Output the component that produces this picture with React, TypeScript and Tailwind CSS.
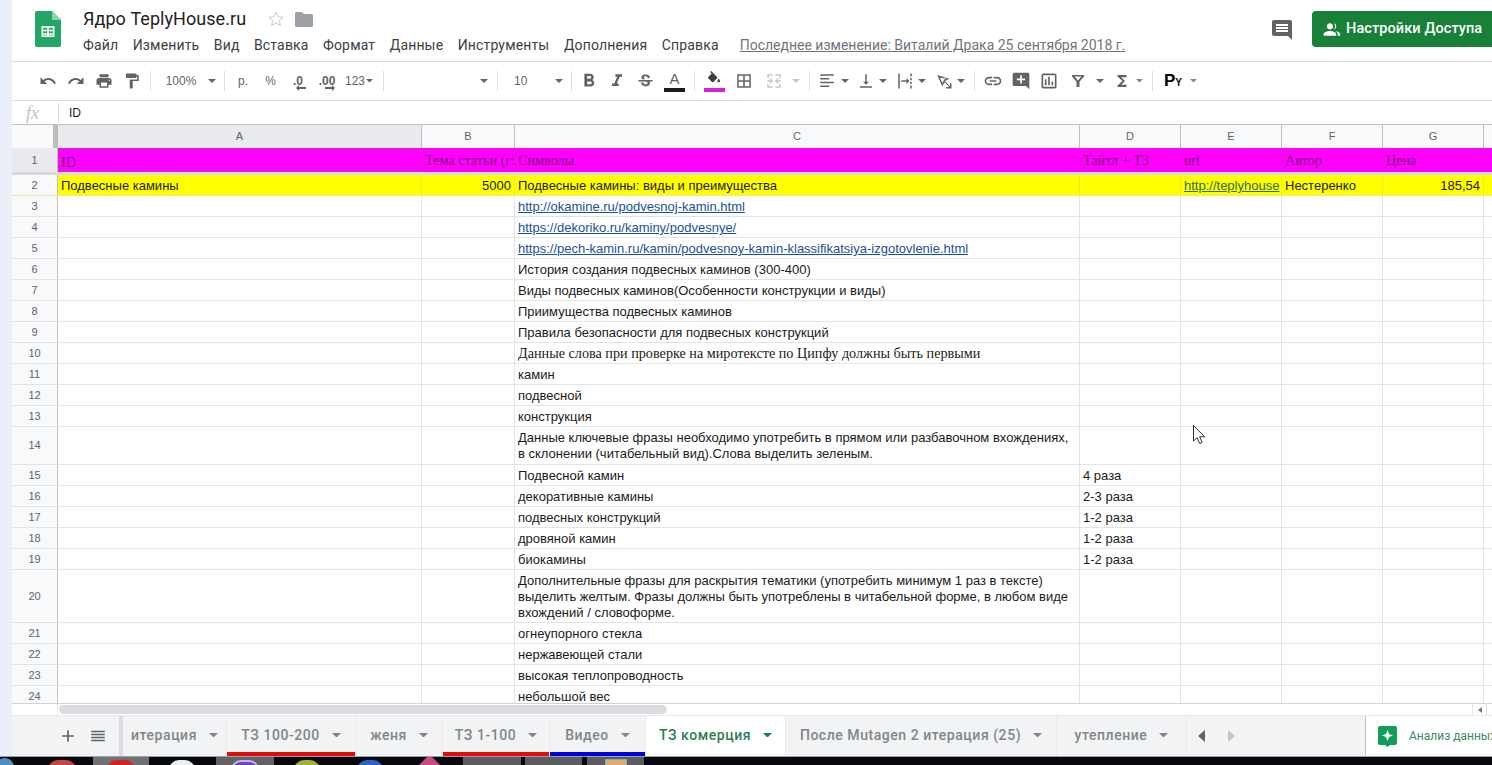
import type { ReactNode } from "react";

const ICON = "#5f6368";

const paths = {
  undo: "M12.5 8c-2.65 0-5.05.99-6.9 2.6L2 7v9h9l-3.62-3.62c1.39-1.16 3.16-1.88 5.12-1.88 3.54 0 6.55 2.31 7.6 5.5l2.37-.78C21.08 11.03 17.15 8 12.5 8z",
  redo: "M18.4 10.6C16.55 8.99 14.15 8 11.5 8c-4.65 0-8.58 3.03-9.96 7.22L3.9 16c1.05-3.19 4.05-5.5 7.6-5.5 1.95 0 3.73.72 5.12 1.88L13 16h9V7l-3.6 3.6z",
  print: "M19 8H5c-1.66 0-3 1.34-3 3v6h4v4h12v-4h4v-6c0-1.66-1.34-3-3-3zm-3 11H8v-5h8v5zm3-7c-.55 0-1-.45-1-1s.45-1 1-1 1 .45 1 1-.45 1-1 1zm-1-9H6v4h12V3z",
  paint: "M18 4V3c0-.55-.45-1-1-1H5c-.55 0-1 .45-1 1v4c0 .55.45 1 1 1h12c.55 0 1-.45 1-1V6h1v4H9v11c0 .55.45 1 1 1h2c.55 0 1-.45 1-1v-9h8V4h-3z",
  bold: "M15.6 10.79c.97-.67 1.65-1.77 1.65-2.79 0-2.26-1.75-4-4-4H7v14h7.04c2.09 0 3.71-1.7 3.71-3.79 0-1.52-.86-2.82-2.15-3.42zM10 6.5h3c.83 0 1.5.67 1.5 1.5s-.67 1.5-1.5 1.5h-3v-3zm3.5 9H10v-3h3.5c.83 0 1.5.67 1.5 1.5s-.67 1.5-1.5 1.5z",
  italic: "M10 4v3h2.21l-3.42 8H6v3h8v-3h-2.21l3.42-8H18V4z",
  strike: "M7.24 8.75c-.26-.48-.39-1.03-.39-1.67 0-.61.13-1.16.4-1.67.26-.5.63-.93 1.11-1.29.48-.35 1.05-.63 1.7-.83.66-.19 1.39-.29 2.18-.29.81 0 1.54.11 2.21.34.66.22 1.23.54 1.69.94.47.4.83.88 1.08 1.43.25.55.38 1.15.38 1.81h-3.01c0-.31-.05-.59-.15-.85-.09-.27-.24-.49-.44-.68-.2-.19-.45-.33-.75-.44-.3-.1-.66-.16-1.06-.16-.39 0-.74.04-1.03.13-.29.09-.53.21-.72.36-.19.16-.34.34-.44.55-.1.21-.15.43-.15.66 0 .48.25.88.74 1.21.38.25.77.48 1.41.7H7.39c-.05-.08-.11-.17-.15-.25zM21 12v-2H3v2h9.62c.18.07.4.14.55.2.37.17.66.34.87.51.21.17.35.36.43.57.07.2.11.43.11.69 0 .23-.05.45-.14.66-.09.2-.23.38-.42.53-.19.15-.42.26-.71.35-.29.08-.63.13-1.01.13-.43 0-.83-.04-1.18-.13s-.66-.23-.91-.42c-.25-.19-.45-.44-.59-.75-.14-.31-.25-.76-.25-1.21H6.4c0 .55.08 1.13.24 1.58.16.45.37.85.65 1.21.28.35.6.66.98.92.37.26.78.48 1.22.65.44.17.9.3 1.38.39.48.08.96.13 1.44.13.8 0 1.53-.09 2.18-.28s1.21-.45 1.67-.79c.46-.34.82-.77 1.07-1.27s.38-1.07.38-1.71c0-.6-.1-1.14-.31-1.61-.05-.11-.11-.23-.17-.33H21z",
  fill: "M16.56 8.94L7.62 0 6.21 1.41l2.38 2.38-5.15 5.15c-.59.59-.59 1.54 0 2.12l5.5 5.5c.29.29.68.44 1.06.44s.77-.15 1.06-.44l5.5-5.5c.59-.58.59-1.53 0-2.12zM19 11.5s-2 2.17-2 3.5c0 1.1.9 2 2 2s2-.9 2-2c0-1.33-2-3.5-2-3.5z",
  borders: "M3 3v18h18V3H3zm8 16H5v-6h6v6zm0-8H5V5h6v6zm8 8h-6v-6h6v6zm0-8h-6V5h6v6z",
  merge: "M3 3h7v2H5v3H3V3zm11 0h7v5h-2V5h-5V3zM3 16h2v3h5v2H3v-5zm16 0h2v5h-7v-2h5v-3zM3 11h5l-2-2 1-1 4 4-4 4-1-1 2-2H3v-2zm18 0v2h-5l2 2-1 1-4-4 4-4 1 1-2 2h5z",
  align: "M3 3h18v2H3zm0 5h12v2H3zm0 5h18v2H3zm0 5h12v2H3z",
  valign: "M16 13h-3V3h-2v10H8l4 4 4-4zM4 19v2h16v-2H4z",
  wrap: "M3 2h2v20H3zM19 2h2v4h-2zm0 6h2v3h-2zm0 5h2v3h-2zm0 5h2v4h-2zM7 11h7V8l4 4-4 4v-3H7z",
  rotate: "M3 4l16 5-5 2.5L9.5 19 3 4zm3.6 3.6l3.2 7 2.6-4.6 2.8-1.2-8.6-1.2zM13 12l7 7v-4h2v7h-7v-2h4l-7-7z",
  link: "M3.9 12c0-1.71 1.39-3.1 3.1-3.1h4V7H7c-2.76 0-5 2.24-5 5s2.24 5 5 5h4v-1.9H7c-1.71 0-3.1-1.39-3.1-3.1zM8 13h8v-2H8v2zm9-6h-4v1.9h4c1.71 0 3.1 1.39 3.1 3.1s-1.39 3.1-3.1 3.1h-4V17h4c2.76 0 5-2.24 5-5s-2.24-5-5-5z",
  addComment: "M22 4c0-1.1-.9-2-2-2H4c-1.1 0-2 .9-2 2v12c0 1.1.9 2 2 2h14l4 4V4zm-5 7h-4v4h-2v-4H7V9h4V5h2v4h4v2z",
  chart: "M19 3H5c-1.1 0-2 .9-2 2v14c0 1.1.9 2 2 2h14c1.1 0 2-.9 2-2V5c0-1.1-.9-2-2-2zm0 16H5V5h14v14zM7 10h2v7H7zm4-3h2v10h-2zm4 6h2v4h-2z",
  filter: "M4 4h16v2l-6 7v7h-4v-7L4 6V4zm3.5 2l4.5 5.3L16.500 6h-9z",
  sigma: "M18 4H6v2l6.5 6L6 18v2h12v-3h-7l5-5-5-5h7z",
  comment: "M21.99 4c0-1.1-.89-2-1.99-2H4c-1.1 0-2 .9-2 2v12c0 1.1.9 2 2 2h14l4 4-.01-18zM18 14H6v-2h12v2zm0-3H6V9h12v2zm0-3H6V6h12v2z",
  person: "M10 12c2.2 0 4-1.8 4-4s-1.8-4-4-4-4 1.8-4 4 1.8 4 4 4zm0 2c-2.67 0-8 1.34-8 4v2h16v-2c0-2.66-5.33-4-8-4zM15 11.900c1.900-.4 3-2 3-3.900s-1.100-3.500-3-3.900c1 1 1.500 2.400 1.500 3.900S16 10.900 15 11.900zM17 14.300c1.800.7 3 1.900 3 3.700v2h3v-2c0-2-3-3.300-6-3.700z",
  plus: "M19 13h-6v6h-2v-6H5v-2h6V5h2v6h6v2z",
  list: "M3 5h18v2H3zm0 4h18v2H3zm0 4h18v2H3zm0 4h18v2H3z",
};

function Icon({ d, size = 18, color = ICON }: { d: string; size?: number; color?: string }) {
  return (
    <svg width={size} height={size} viewBox="0 0 24 24" fill={color} className="shrink-0">
      <path d={d} />
    </svg>
  );
}

function Caret({ color = "#666", size = 8 }: { color?: string; size?: number }) {
  return (
    <svg width={size} height={size / 2} viewBox="0 0 8 4" fill={color} className="shrink-0">
      <path d="M0 0h8L4 4z" />
    </svg>
  );
}

function Btn({ w, children }: { w: string; children: ReactNode }) {
  return <div className={`flex h-full items-center justify-center shrink-0 ${w}`}>{children}</div>;
}

function Sep({ ml }: { ml: string }) {
  return <div className={`h-[20px] w-px shrink-0 bg-[#dadce0] ${ml}`} />;
}

function Toolbar() {
  return (
    <div className="flex h-[40px] shrink-0 items-center border-y border-[#dadce0] pl-[21px] text-[12px] text-[#5f6368] [font-family:'Liberation_Sans',sans-serif]">
      <Btn w="w-[29px]"><Icon d={paths.undo} /></Btn>
      <Btn w="w-[28px]"><Icon d={paths.redo} /></Btn>
      <Btn w="w-[28px]"><Icon d={paths.print} /></Btn>
      <Btn w="w-[28px]"><Icon d={paths.paint} /></Btn>
      <Sep ml="ml-[4px]" />
      <Btn w="w-[50px] ml-[5px]">100%</Btn>
      <Btn w="w-[12px]"><Caret /></Btn>
      <Sep ml="ml-[6px]" />
      <Btn w="w-[28px] ml-[4px]">р.</Btn>
      <Btn w="w-[27px]">%</Btn>
      <Btn w="w-[28px]">
        <span className="relative font-bold">
          .0
          <svg width="10" height="6" viewBox="0 0 10 6" className="absolute left-[3px] top-[13px]" fill="#5f6368"><path d="M0 3l3-3v2h7v2H3v2z" /></svg>
        </span>
      </Btn>
      <Btn w="w-[30px]">
        <span className="relative font-bold">
          .00
          <svg width="10" height="6" viewBox="0 0 10 6" className="absolute left-[6px] top-[13px]" fill="#5f6368"><path d="M10 3L7 0v2H0v2h7v2z" /></svg>
        </span>
      </Btn>
      <Btn w="w-[34px] gap-[1px]">123<Caret size={7} /></Btn>
      <Sep ml="ml-[7px]" />
      <div className="w-[94px] shrink-0" />
      <Btn w="w-[12px]"><Caret /></Btn>
      <Sep ml="ml-[7px]" />
      <div className="w-[55px] shrink-0 pl-[16px]">10</div>
      <Btn w="w-[12px]"><Caret /></Btn>
      <Sep ml="ml-[6px]" />
      <Btn w="w-[28px] ml-[3px]"><Icon d={paths.bold} size={22} /></Btn>
      <Btn w="w-[28px]"><Icon d={paths.italic} size={20} /></Btn>
      <Btn w="w-[28px]"><Icon d={paths.strike} size={19} /></Btn>
      <Btn w="w-[31px]">
        <div className="flex flex-col items-center">
          <span className="text-[15px] leading-[16px]">A</span>
          <div className="mt-[1px] h-[4px] w-[21px] bg-[#1a1a1a]" />
        </div>
      </Btn>
      <Sep ml="ml-[4px]" />
      <Btn w="w-[28px] ml-[5px]">
        <div className="flex flex-col items-center">
          <Icon d={paths.fill} size={16} color="#3c4043" />
          <div className="mt-[1px] h-[4px] w-[21px] bg-[#d61fd6]" />
        </div>
      </Btn>
      <Btn w="w-[28px] ml-[2px]"><Icon d={paths.borders} /></Btn>
      <Btn w="w-[28px] ml-[2px]"><Icon d={paths.merge} color="#c4c6c9" /></Btn>
      <Btn w="w-[12px] ml-[2px]"><Caret color="#c4c6c9" /></Btn>
      <Sep ml="ml-[7px]" />
      <Btn w="w-[24px] ml-[5px]"><Icon d={paths.align} /></Btn>
      <Btn w="w-[12px]"><Caret /></Btn>
      <Btn w="w-[22px] ml-[4px]"><Icon d={paths.valign} /></Btn>
      <Btn w="w-[12px]"><Caret /></Btn>
      <Btn w="w-[22px] ml-[5px]"><Icon d={paths.wrap} /></Btn>
      <Btn w="w-[12px]"><Caret /></Btn>
      <Btn w="w-[22px] ml-[5px]"><Icon d={paths.rotate} /></Btn>
      <Btn w="w-[12px]"><Caret /></Btn>
      <Sep ml="ml-[7px]" />
      <Btn w="w-[28px] ml-[4px]"><Icon d={paths.link} size={20} /></Btn>
      <Btn w="w-[28px]"><Icon d={paths.addComment} size={20} /></Btn>
      <Btn w="w-[28px]"><Icon d={paths.chart} size={20} /></Btn>
      <Btn w="w-[28px] ml-[1px]"><Icon d={paths.filter} /></Btn>
      <Btn w="w-[12px] ml-[2px]"><Caret /></Btn>
      <Btn w="w-[22px] ml-[5px]"><Icon d={paths.sigma} /></Btn>
      <Btn w="w-[12px]"><Caret color="#888" size={7} /></Btn>
      <Sep ml="ml-[7px]" />
      <Btn w="w-[26px] ml-[7px]">
        <span className="font-bold text-black">
          <span className="text-[17px]">P</span>
          <span className="text-[10px]">Y</span>
        </span>
      </Btn>
      <Btn w="w-[12px] ml-[1px]"><Caret color="#888" size={7} /></Btn>
    </div>
  );
}

function Header() {
  const menu = ["Файл", "Изменить", "Вид", "Вставка", "Формат", "Данные", "Инструменты", "Дополнения", "Справка"];
  return (
    <div className="flex h-[61px] shrink-0 overflow-hidden [font-family:Roboto,sans-serif]">
      <svg width="26" height="36" viewBox="0 0 26 36" className="ml-[23px] mt-[11px] shrink-0">
        <path d="M2 0h15l9 9v25a2 2 0 0 1-2 2H2a2 2 0 0 1-2-2V2a2 2 0 0 1 2-2z" fill="#23a566" />
        <path d="M17 0l9 9h-9z" fill="#8ed1b1" />
        <path d="M6.5 15h13v11h-13zM8 16.7v2h4.2v-2zm5.8 0v2H18v-2zM8 20.3v1.9h4.2v-1.9zm5.8 0v1.9H18v-1.9zM8 23.8v.8h4.2v-.8zm5.8 0v.8H18v-.8z" fill="#fff" fillRule="evenodd" />
      </svg>
      <div className="ml-[22px] w-[1188px] shrink-0">
        <div className="mt-[7px] flex h-[24px] items-center">
          <span className="text-[18px] leading-[24px] tracking-[0.05px] text-[#202124]">Ядро TeplyHouse.ru</span>
          <svg width="18" height="18" viewBox="0 0 24 24" fill="none" stroke="#d0d2d5" strokeWidth="1.5" className="ml-[21px]">
            <path d="M12 3l2.8 6 6.5.7-4.900 4.400 1.400 6.400L12 17.200 6.200 20.500l1.400-6.400-4.900-4.400 6.500-.7z" />
          </svg>
          <svg width="18" height="15" viewBox="0 0 18 15" fill="#9aa0a6" className="ml-[10px]">
            <path d="M1.500 0h5.500l2 2h7.500a1.500 1.500 0 0 1 1.500 1.500v10a1.500 1.500 0 0 1-1.500 1.500h-15A1.500 1.500 0 0 1 0 13.500v-12A1.500 1.500 0 0 1 1.500 0z" />
          </svg>
        </div>
        <div className="mt-[5px] flex items-center text-[14px] leading-[18px] text-[#3c4043]">
          <div className="flex gap-[14.5px] tracking-[0.15px]">
            {menu.map((m) => (
              <span key={m}>{m}</span>
            ))}
          </div>
          <span className="ml-[21px] text-[#70757a] underline">Последнее изменение: Виталий Драка 25 сентября 2018 г.</span>
        </div>
      </div>
      <div className="ml-[-1px] mt-[18px] shrink-0">
        <Icon d={paths.comment} size={24} color="#5f6368" />
      </div>
      <div className="ml-[18px] mt-[11px] flex h-[36px] w-[200px] shrink-0 items-center gap-[5px] rounded-[4px] bg-[#188038] pl-[10px] text-[14.5px] font-medium tracking-[0.1px] text-white">
        <Icon d={paths.person} size={19} color="#fff" />
        Настройки Доступа
      </div>
    </div>
  );
}

type Row = { n: number; h: string; c?: string; d?: string; link?: boolean; serif?: boolean; pad?: string };

const rows: Row[] = [
  { n: 3, h: "h-[21px]", c: "http://okamine.ru/podvesnoj-kamin.html", link: true },
  { n: 4, h: "h-[21px]", c: "https://dekoriko.ru/kaminy/podvesnye/", link: true },
  { n: 5, h: "h-[21px]", c: "https://pech-kamin.ru/kamin/podvesnoy-kamin-klassifikatsiya-izgotovlenie.html", link: true },
  { n: 6, h: "h-[21px]", c: "История создания подвесных каминов (300-400)" },
  { n: 7, h: "h-[21px]", c: "Виды подвесных каминов(Особенности конструкции и виды)" },
  { n: 8, h: "h-[21px]", c: "Приимущества подвесных каминов" },
  { n: 9, h: "h-[21px]", c: "Правила безопасности для подвесных конструкций" },
  { n: 10, h: "h-[21px]", c: "Данные слова при проверке на миротексте по Ципфу должны быть первыми", serif: true },
  { n: 11, h: "h-[21px]", c: "камин" },
  { n: 12, h: "h-[21px]", c: "подвесной" },
  { n: 13, h: "h-[21px]", c: "конструкция" },
  { n: 14, h: "h-[38px]", pad: "pt-[3px]", c: "Данные ключевые фразы необходимо употребить в прямом или разбавочном вхождениях, в склонении (читабельный вид).Слова выделить зеленым." },
  { n: 15, h: "h-[21px]", c: "Подвесной камин", d: "4 раза" },
  { n: 16, h: "h-[21px]", c: "декоративные камины", d: "2-3 раза" },
  { n: 17, h: "h-[21px]", c: "подвесных конструкций", d: "1-2 раза" },
  { n: 18, h: "h-[21px]", c: "дровяной камин", d: "1-2 раза" },
  { n: 19, h: "h-[21px]", c: "биокамины", d: "1-2 раза" },
  { n: 20, h: "h-[53px]", pad: "pt-[3px]", c: "Дополнительные фразы для раскрытия тематики (употребить минимум 1 раз в тексте) выделить желтым. Фразы должны быть употреблены в читабельной форме, в любом виде вхождений / словоформе." },
  { n: 21, h: "h-[21px]", c: "огнеупорного стекла" },
  { n: 22, h: "h-[21px]", c: "нержавеющей стали" },
  { n: 23, h: "h-[21px]", c: "высокая теплопроводность" },
  { n: 24, h: "h-[21px]", c: "небольшой вес" },
];

const cellBase = "shrink-0 overflow-hidden whitespace-nowrap px-[3px] border-r";

function ColHeader() {
  const cols = [
    { l: "A", w: "w-[364px] bg-[#e8eaed]" },
    { l: "B", w: "w-[93px]" },
    { l: "C", w: "w-[565px]" },
    { l: "D", w: "w-[101px]" },
    { l: "E", w: "w-[101px]" },
    { l: "F", w: "w-[101px]" },
    { l: "G", w: "w-[101px]" },
    { l: "", w: "w-[20px]" },
  ];
  return (
    <div className="flex h-[24px] shrink-0 border-t border-[#c0c0c0] bg-[#f8f9fa] text-[11px] text-[#5f6368]">
      <div className="h-[20px] w-[41px] shrink-0 bg-[#f8f9fa]" />
      <div className="h-[23px] w-[5px] shrink-0 bg-[#bdbdbd]" />
      {cols.map((c) => (
        <div key={c.l} className={`flex h-full shrink-0 items-center justify-center border-r border-[#c0c0c0] ${c.w}`}>
          {c.l}
        </div>
      ))}
    </div>
  );
}

function HeadRow() {
  const cell = `${cellBase} border-[#e815e8] leading-[24px] text-[14.2px] text-[#7a0a7a] [font-family:'Liberation_Serif',serif]`;
  return (
    <div className="flex h-[24px] shrink-0">
      <div className="flex w-[46px] shrink-0 items-center justify-center border-r border-[#c0c0c0] bg-[#e8eaed] text-[11px] text-[#5f6368]">1</div>
      <div className="flex flex-1 bg-[#ff00ff]">
        <div className={`${cell} h-full w-[364px] border-2 border-[#5a5fe8] leading-[20px] pl-[1px] text-[#6a20a0]`}>ID</div>
        <div className={`${cell} w-[93px]`}>Тема статьи (г:</div>
        <div className={`${cell} w-[565px]`}>Символы</div>
        <div className={`${cell} w-[101px]`}>Тайтл + ТЗ</div>
        <div className={`${cell} w-[101px]`}>url</div>
        <div className={`${cell} w-[101px]`}>Автор</div>
        <div className={`${cell} w-[101px]`}>Цена</div>
      </div>
    </div>
  );
}

function YellowRow() {
  const cell = `${cellBase} border-[#ecec20] leading-[21px]`;
  return (
    <div className="flex h-[21px] shrink-0 border-b border-[#e6e6a0]">
      <div className="flex w-[46px] shrink-0 items-center justify-center border-r border-[#c0c0c0] bg-[#f8f9fa] text-[11px] text-[#5f6368]">2</div>
      <div className="flex flex-1 bg-[#ffff00]">
        <div className={`${cell} w-[364px]`}>Подвесные камины</div>
        <div className={`${cell} w-[93px] text-right`}>5000</div>
        <div className={`${cell} w-[565px]`}>Подвесные камины: виды и преимущества</div>
        <div className={`${cell} w-[101px]`} />
        <div className={`${cell} w-[101px] text-[#2f6b3c] underline`}>http://teplyhouse</div>
        <div className={`${cell} w-[101px]`}>Нестеренко</div>
        <div className={`${cell} w-[101px] text-right`}>185,54</div>
      </div>
    </div>
  );
}

function DataRow({ r }: { r: Row }) {
  const line = "border-[#e2e3e3]";
  return (
    <div className={`flex shrink-0 border-b ${line} ${r.h}`}>
      <div className="flex w-[46px] shrink-0 items-center justify-center border-r border-[#c0c0c0] bg-[#f8f9fa] text-[11px] text-[#5f6368]">
        {r.n}
      </div>
      <div className={`${cellBase} ${line} w-[364px]`} />
      <div className={`${cellBase} ${line} w-[93px]`} />
      <div
        className={`${cellBase} ${line} w-[565px] ${r.pad ? `whitespace-normal! leading-[16px] ${r.pad}` : "leading-[21px]"} ${
          r.link ? "text-[#1a4f9c] underline" : ""
        } ${r.serif ? "font-medium text-[14.2px] [font-family:'Liberation_Serif',serif]" : ""}`}
      >
        {r.c}
      </div>
      <div className={`${cellBase} ${line} w-[101px] leading-[21px]`}>{r.d}</div>
      <div className={`${cellBase} ${line} w-[101px]`} />
      <div className={`${cellBase} ${line} w-[101px]`} />
      <div className={`${cellBase} ${line} w-[101px]`} />
    </div>
  );
}

function Tab({ w, label, bar, active }: { w: string; label: string; bar?: string; active?: boolean }) {
  return (
    <div className={`relative flex h-full shrink-0 items-center justify-center gap-[12px] border-r border-[#e8eaed] pb-[2px] ${w} ${active ? "bg-white text-[#2e7d4f]" : "text-[#80868b]"}`}>
      <span>{label}</span>
      <Caret color={active ? "#188038" : "#80868b"} size={9} />
      {bar && <div className={`absolute inset-x-0 bottom-0 h-[4px] ${bar}`} />}
    </div>
  );
}

function TabBar() {
  return (
    <div className="flex h-[40px] shrink-0 items-center overflow-hidden bg-[#f1f3f4] text-[14px] font-medium tracking-[0.55px] [font-family:Roboto,sans-serif]">
      <div className="ml-[41px] flex w-[30px] shrink-0 justify-center"><Icon d={paths.plus} size={20} /></div>
      <div className="flex w-[30px] shrink-0 justify-center"><Icon d={paths.list} size={18} /></div>
      <div className="ml-[6px] h-full w-[4px] shrink-0 bg-[#dadce0]" />
      <Tab w="w-[104px]" label="итерация" />
      <Tab w="w-[129px]" label="ТЗ 100-200" bar="bg-[#e00b0b]" />
      <Tab w="w-[87px]" label="женя" />
      <Tab w="w-[107px]" label="ТЗ 1-100" bar="bg-[#e00b0b]" />
      <Tab w="w-[96px]" label="Видео" bar="bg-[#0000d8]" />
      <Tab w="w-[140px]" label="ТЗ комерция" active />
      <Tab w="w-[271px]" label="После Mutagen 2 итерация (25)" />
      <Tab w="w-[130px]" label="утепление" />
      <svg width="7" height="12" viewBox="0 0 7 12" fill="#5f6368" className="ml-[11px] shrink-0"><path d="M7 0v12L0 6z" /></svg>
      <svg width="7" height="12" viewBox="0 0 7 12" fill="#c4c6c9" className="ml-[23px] shrink-0"><path d="M0 0v12l7-6z" /></svg>
      <div className="ml-[130px] flex h-full w-[127px] shrink-0 items-center border-l border-[#c0c0c0] bg-white pl-[12px] text-[12px] font-normal tracking-normal whitespace-nowrap text-[#3c8a5e]">
        <svg width="19" height="21" viewBox="0 0 19 21" className="shrink-0">
          <path d="M2 0h15a2 2 0 0 1 2 2v15a2 2 0 0 1-2 2h-5l-2.500 2L7 19H2a2 2 0 0 1-2-2V2a2 2 0 0 1 2-2z" fill="#0f9d58" />
          <path d="M9.500 4l1.500 4 4 1.500-4 1.500-1.500 4L8 11 4 9.500 8 8z" fill="#fff" />
        </svg>
        <span className="ml-[12px]">Анализ данных</span>
      </div>
    </div>
  );
}

function Taskbar() {
  return (
    <div className="relative flex h-[9px] shrink-0 overflow-hidden border-t border-[#9aa0a6] bg-[#07090c]">
      <div className="mt-[1px] ml-[-4px] h-[20px] w-[18px] shrink-0 rounded-full bg-[#4d8fc4]" />
      <div className="ml-[34px] mt-[3px] h-[20px] w-[28px] shrink-0 rounded-full bg-[#c8473f]" />
      <div className="ml-[17px] flex h-full w-[56px] shrink-0 justify-center bg-[#6f7174]"><div className="mt-[3px] h-[20px] w-[28px] rounded-full bg-[#d4202a]" /></div>
      <div className="ml-[20px] mt-[3px] h-[20px] w-[26px] shrink-0 rounded-full bg-[#eceff1]" />
      <div className="ml-[21px] flex h-full w-[58px] shrink-0 justify-center bg-[#606265]"><div className="mt-[3px] h-[20px] w-[28px] rounded-full border-2 border-[#c9b6ea] bg-[#6c46b8]" /></div>
      <div className="ml-[20px] mt-[3px] h-[20px] w-[26px] shrink-0 rounded-full bg-[#9db52e]" />
      <div className="ml-[37px] mt-[3px] h-[20px] w-[26px] shrink-0 rounded-full bg-[#2a64c4]" />
      <div className="ml-[36px] mt-[3px] h-[20px] w-[24px] shrink-0 rotate-45 bg-[#c44d84]" />
      <div className="ml-[20px] h-full w-[58px] shrink-0 bg-[#5a5c5e]" />
      <div className="ml-[4px] h-full w-[57px] shrink-0 bg-[#5a5c5e]" />
      <div className="ml-[5px] flex h-full w-[57px] shrink-0 justify-center bg-[#5a5c5e]"><div className="mt-[2px] h-[20px] w-[22px] border border-[#7fa8d8] bg-[#d8b06a]" /></div>
    </div>
  );
}

export default function App() {
  return (
    <div className="relative flex h-[765px] w-[1492px] flex-col overflow-hidden bg-white text-[13px] text-[#1a1a1a] [font-family:'Liberation_Sans',sans-serif]">
      <div className="flex min-h-0 flex-1">
        <div className="w-[12px] shrink-0 bg-[#e9f0f7]" />
        <div className="flex w-[1480px] shrink-0 flex-col">
          <Header />
          <Toolbar />
          <div className="flex h-[23px] shrink-0 items-center">
            <span className="w-[46px] pl-[14px] text-[18px] italic leading-none text-[#c0c2c5] [font-family:'Liberation_Serif',serif]">fx</span>
            <div className="h-[20px] w-px bg-[#dadce0]" />
            <span className="pl-[10px] text-[12px]">ID</span>
          </div>
          <ColHeader />
          <HeadRow />
          <div className="h-[3px] shrink-0 bg-[#d8dadc]" />
          <YellowRow />
          <div className="min-h-0 flex-1 overflow-hidden border-b border-[#d0d2d4]">
            {rows.map((r) => (
              <DataRow key={r.n} r={r} />
            ))}
          </div>
          <div className="flex h-[12px] shrink-0 items-center border-b border-[#e8eaed]">
            <div className="h-full w-[46px] shrink-0 border-r border-[#e2e3e3]" />
            <div className="ml-px h-[9px] w-[608px] rounded-full bg-[#dadce0]" />
            <div className="ml-[805px] flex h-full w-[15px] items-center justify-center border-x border-[#e2e3e3]">
              <svg width="4" height="6" viewBox="0 0 4 6" fill="#777"><path d="M4 0v6L0 3z" /></svg>
            </div>
          </div>
          <TabBar />
        </div>
      </div>
      <Taskbar />
      {/* mouse pointer over the sheet */}
      <svg width="13" height="20" viewBox="0 0 13 20" className="absolute left-[1193px] top-[425px]">
        <path d="M.5.500v15.500l3.700-3.300 2.400 5.800 2.500-1-2.400-5.700h5z" fill="#fff" stroke="#333" strokeWidth="1" />
      </svg>
    </div>
  );
}
